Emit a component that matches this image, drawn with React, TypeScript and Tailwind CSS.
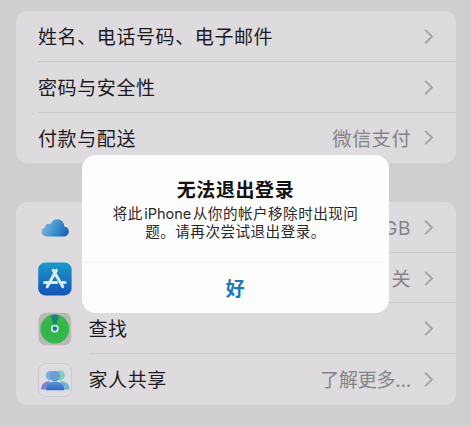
import React from 'react';

interface Item {
  label?: string;
  value?: string;
  icon?: React.ReactNode;
}

function Chevron() {
  return (
    <svg className="w-[10px] h-[15px] mt-px ml-[13px] shrink-0" viewBox="0 0 10 15" fill="none">
      <path d="M1.7 1.4 L8 7.5 L1.7 13.6" stroke="#a5a3a7" strokeWidth="2" strokeLinecap="round" strokeLinejoin="round" />
    </svg>
  );
}

function CloudIcon() {
  return (
    <svg className="w-[34px] h-[34px]" viewBox="0 0 34 34">
      <defs>
        <linearGradient id="cloud" x1="0" y1="0.4" x2="1" y2="0.7">
          <stop offset="0" stopColor="#7fb7dc" />
          <stop offset="0.5" stopColor="#3f92cf" />
          <stop offset="1" stopColor="#1762b8" />
        </linearGradient>
      </defs>
      <path
        d="M9.2 25.4 C5.7 25.4 3.6 23.4 3.6 20.7 C3.6 18.5 5 17 7 16.6 C7 13.8 9.8 12.1 12.4 13.2 C13.6 10.2 16.1 8.2 19.2 8.2 C23.4 8.2 26.2 11.4 26.3 15.5 C29 15.9 30.8 17.8 30.8 20.4 C30.8 23.3 28.6 25.4 25.5 25.4 Z"
        fill="url(#cloud)"
      />
    </svg>
  );
}

function StoreIcon() {
  return (
    <svg className="w-[34px] h-[34px]" viewBox="0 0 34 34">
      <defs>
        <linearGradient id="store" x1="0" y1="0" x2="0" y2="1">
          <stop offset="0" stopColor="#1b9bc9" />
          <stop offset="1" stopColor="#1552b8" />
        </linearGradient>
      </defs>
      <rect x="0.2" y="0.4" width="33.4" height="33" rx="7" fill="url(#store)" />
      <g stroke="#dcebf5" strokeWidth="3" strokeLinecap="round" fill="none">
        <path d="M18.4 8.2 L9.2 24.8" />
        <path d="M15.2 8.2 L24.8 24.8" />
        <path d="M6.6 20.6 H18.6" />
        <path d="M23.6 20.6 H27" />
      </g>
    </svg>
  );
}

function FindIcon() {
  return (
    <svg className="w-[34px] h-[34px]" viewBox="0 0 34 34">
      <rect x="0.6" y="0.8" width="32.6" height="32.4" rx="7" fill="#b9b7b7" />
      <circle cx="16.8" cy="17" r="14.4" fill="#35b84a" />
      <circle cx="16.8" cy="17" r="9" fill="#32b447" />
      <path d="M16.8 17 L12.6 3.2 A14.4 14.4 0 0 1 21 3.2 Z" fill="#1b8277" />
      <circle cx="16.8" cy="16.6" r="3.9" fill="#e0efea" />
      <circle cx="16.8" cy="16.6" r="2.3" fill="#1975a5" />
    </svg>
  );
}

function FamilyIcon() {
  return (
    <svg className="w-[34px] h-[34px]" viewBox="0 0 34 34">
      <defs>
        <linearGradient id="family" x1="0" y1="0" x2="0" y2="1">
          <stop offset="0" stopColor="#5f97d8" />
          <stop offset="1" stopColor="#2f68c0" />
        </linearGradient>
      </defs>
      <rect x="0.6" y="0.6" width="33" height="33" rx="7" fill="#dfdde1" stroke="#cbc9cd" />
      <circle cx="21.8" cy="12.4" r="5" fill="#82cbbf" />
      <circle cx="12.6" cy="12.6" r="4.8" fill="#7eafe0" />
      <path d="M3 26.6 C3.2 21.2 6.6 18.2 11.6 18.2 L15 26.6 Z" fill="#7d80d0" />
      <path d="M31.6 26.6 C31.4 21.2 28 18.2 23 18.2 L19 26.6 Z" fill="#6fb4d4" />
      <circle cx="16.8" cy="13" r="5.2" fill="#669fd0" />
      <path d="M8.2 27.2 C8.4 21.6 11.6 18.4 17.2 18.4 C22.8 18.4 26 21.6 26.2 27.2 Z" fill="url(#family)" />
    </svg>
  );
}

const accountItems: Item[] = [
  { label: '姓名、电话号码、电子邮件' },
  { label: '密码与安全性' },
  { label: '付款与配送', value: '微信支付' },
];

const serviceItems: Item[] = [
  { value: 'GB', icon: <CloudIcon /> },
  { value: '关', icon: <StoreIcon /> },
  { label: '查找', icon: <FindIcon /> },
  { label: '家人共享', value: '了解更多...', icon: <FamilyIcon /> },
];

function Row({ item, last }: { item: Item; last: boolean }) {
  return (
    <div className={`flex h-[50.6px] ${item.icon ? 'pl-[21.5px]' : 'pl-[22px]'}`}>
      {item.icon && <div className="flex items-center w-[51px] pt-px shrink-0">{item.icon}</div>}
      <div className={`flex flex-1 items-center pr-[22px] border-b ${last ? 'border-transparent' : 'border-[#cac8cb]'}`}>
        <span className="flex-1 pt-[5px] text-[#1c1a1e]">{item.label}</span>
        {item.value && (
          <span className={`pt-[5px] text-[#858387] ${item.value.endsWith('...') ? 'tracking-[-0.25px]' : ''}`}>
            {item.value}
          </span>
        )}
        <Chevron />
      </div>
    </div>
  );
}

function Group({ items }: { items: Item[] }) {
  return (
    <div className="rounded-[11px] overflow-hidden bg-[#dddbde]">
      {items.map((item, i) => (
        <Row key={i} item={item} last={i === items.length - 1} />
      ))}
    </div>
  );
}

function Alert() {
  return (
    <div className="absolute left-[82px] top-[155px] w-[307px] h-[158px] rounded-[14px] bg-[#fefdfe] flex flex-col text-center">
      <div className="h-[108px] pt-[23px] border-b border-[#f3f1f3]">
        <h2 className="text-[19px] leading-[26px] font-bold tracking-[0.6px] text-[#141215]">无法退出登录</h2>
        <p className="pt-px text-[14.6px] leading-[18px] tracking-[0.45px] text-[#29272a]">
          将此<span className="mx-[1.5px] text-[14.5px] tracking-[0px]">iPhone</span>从你的帐户移除时出现问
          <br />
          <span className="tracking-[0.45px]">题。请再次尝试退出登录。</span>
        </p>
      </div>
      <button className="flex-1 pt-[5px] text-[19px] font-bold text-[#1a78b8]">好</button>
    </div>
  );
}

export default function App() {
  return (
    <div className="relative w-[471px] h-[427px] overflow-hidden bg-[#d0ced1] pl-4 pr-[15px] pt-[11.4px] text-[19px] tracking-[0.6px] font-['Inter','Noto_Sans_CJK_SC',sans-serif]">
      <div className="flex flex-col gap-[39px]">
        <Group items={accountItems} />
        <Group items={serviceItems} />
      </div>
      <Alert />
    </div>
  );
}
